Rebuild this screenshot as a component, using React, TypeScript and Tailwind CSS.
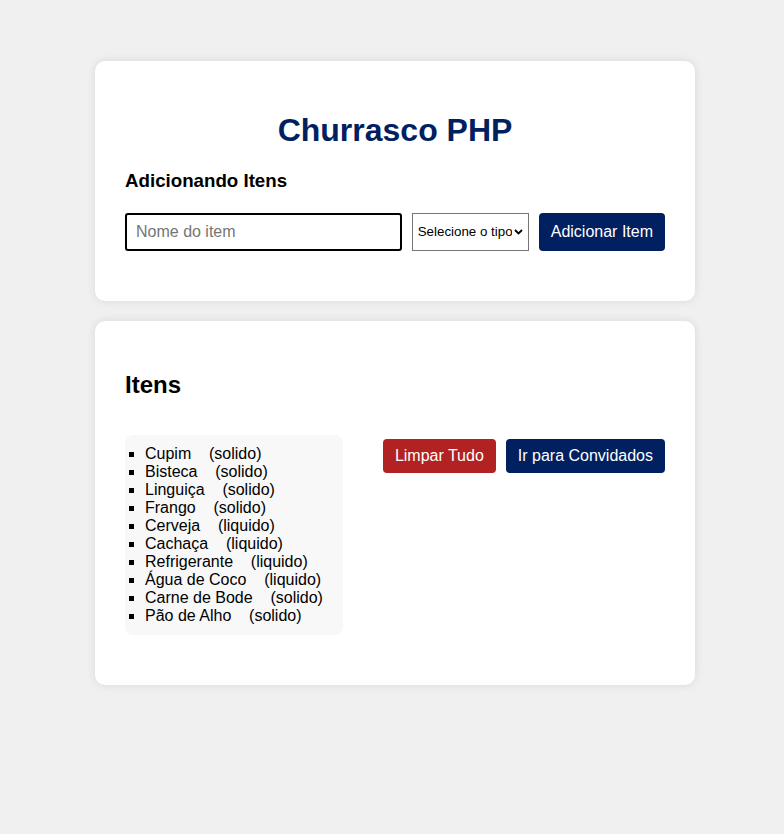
import React from "react";

const items: [string, string][] = [
  ["Cupim", "solido"],
  ["Bisteca", "solido"],
  ["Linguiça", "solido"],
  ["Frango", "solido"],
  ["Cerveja", "liquido"],
  ["Cachaça", "liquido"],
  ["Refrigerante", "liquido"],
  ["Água de Coco", "liquido"],
  ["Carne de Bode", "solido"],
  ["Pão de Alho", "solido"],
];

export default function App() {
  return (
    <div
      className="min-h-[834px] w-full bg-[#f0f0f0] pt-[61px]"
      style={{ fontFamily: '"Liberation Sans", Arial, sans-serif' }}
    >
      <div className="ml-[95px] flex w-[600px] flex-col gap-[20px]">
        <div className="rounded-[10px] bg-white p-[30px] shadow-[0_0_10px_rgba(0,0,0,0.1)]">
          <h1 className="mt-[21px] mb-[21px] text-center text-[32px] font-bold leading-[37px] text-[#002060]">
            Churrasco PHP
          </h1>
          <h3 className="mb-[21px] text-[18.72px] font-bold leading-[22px] text-black">
            Adicionando Itens
          </h3>
          <div className="mb-[20px] flex items-center gap-[10px]">
            <input
              type="text"
              placeholder="Nome do item"
              className="h-[38px] flex-1 rounded-[3px] border-2 border-black px-[9px] text-[16px] text-black outline-none placeholder:text-[#757575]"
            />
            <div className="relative h-[38px] w-[117px]">
              <select
                className="h-[38px] w-[117px] appearance-none border border-[#767676] bg-white pl-[5px] pr-[16px] text-[13.33px] text-black outline-none"
                defaultValue=""
              >
                <option value="">Selecione o tipo</option>
                <option value="solido">Sólido</option>
                <option value="liquido">Líquido</option>
              </select>
              <svg
                className="pointer-events-none absolute right-[6px] top-[16px]"
                width="9"
                height="6"
                viewBox="0 0 9 6"
              >
                <path d="M1 1 L4.5 4.5 L8 1" fill="none" stroke="#000" strokeWidth="1.8" />
              </svg>
            </div>
            <button className="h-[38px] rounded-[4px] bg-[#002060] px-[12px] text-[16px] text-white">
              Adicionar Item
            </button>
          </div>
        </div>

        <div className="rounded-[10px] bg-white p-[30px] shadow-[0_0_10px_rgba(0,0,0,0.1)]">
          <h2 className="mt-[20px] mb-[36px] text-[24px] font-bold leading-[28px] text-black">
            Itens
          </h2>
          <div className="mb-[20px] flex items-start justify-between">
            <ul className="list-[square] rounded-[8px] bg-[#f8f8f8] py-[10px] pr-[20px] pl-[20px] text-[16px] leading-[18px] text-black">
              {items.map(([name, type]) => (
                <li key={name}>
                  {name}
                  {"\u00a0\u00a0\u00a0\u00a0"}({type})
                </li>
              ))}
            </ul>
            <div className="mt-[4px] flex gap-[10px]">
              <button className="h-[34px] rounded-[4px] bg-[#b22222] px-[12px] text-[16px] text-white">
                Limpar Tudo
              </button>
              <button className="h-[34px] rounded-[4px] bg-[#002060] px-[12px] text-[16px] text-white">
                Ir para Convidados
              </button>
            </div>
          </div>
        </div>
      </div>
    </div>
  );
}
